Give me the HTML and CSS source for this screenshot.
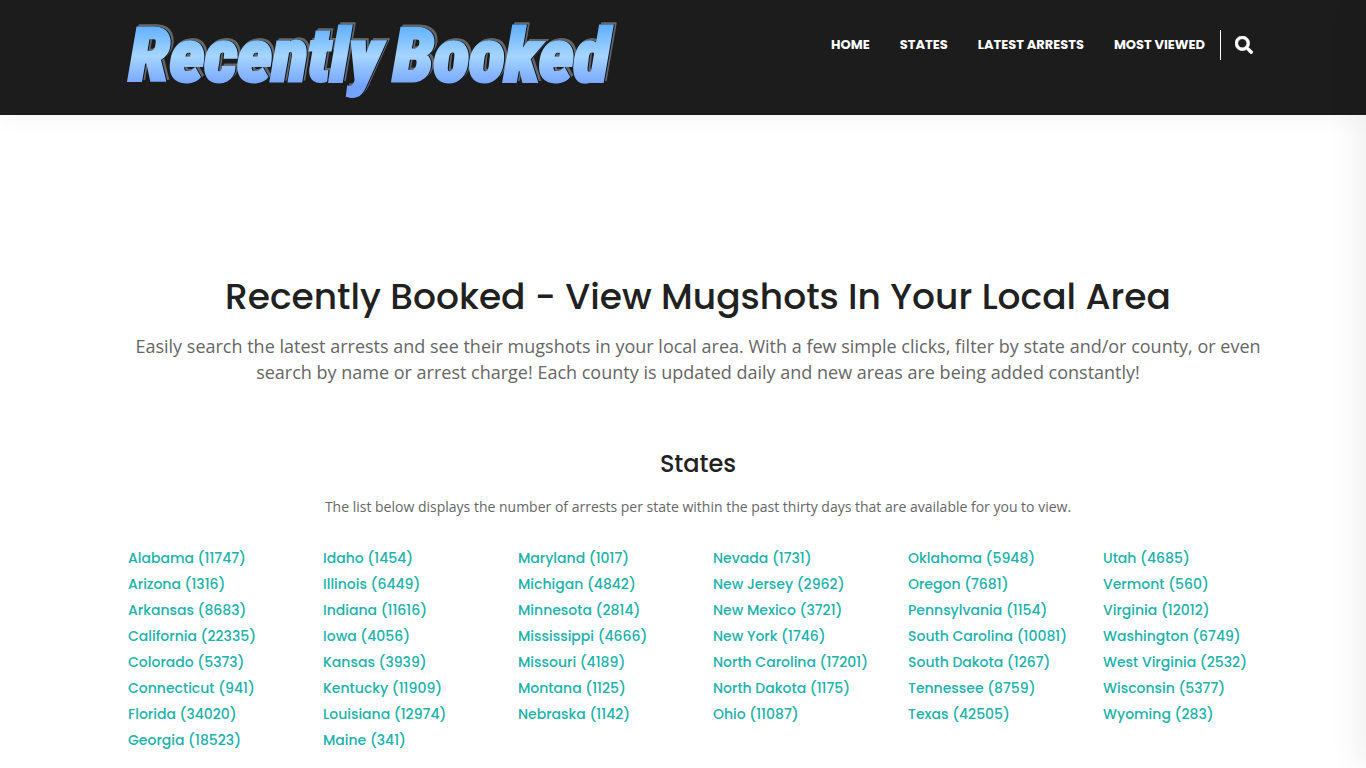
FILE: index.html
```html
<!DOCTYPE html>
<html lang="en">
<head>
<meta charset="utf-8">
<meta name="viewport" content="width=device-width, initial-scale=1">
<title>Recently Booked</title>
<link rel="stylesheet" href="styles.css">
</head>
<body>
<header class="header">
  <div class="header-inner">
    <a class="logo" href="#" aria-label="Recently Booked">
      <svg class="logo-art" viewBox="0 0 492 72" role="img">
        <defs>
          <linearGradient id="sky" gradientUnits="userSpaceOnUse" x1="0" y1="6" x2="0" y2="66">
            <stop offset="0" stop-color="#62b0fc"/>
            <stop offset=".5" stop-color="#a6d5ff"/>
            <stop offset="1" stop-color="#74a3ff"/>
          </linearGradient>
        </defs>
        <text class="logo-text" y="61"><tspan x="4">Recently </tspan><tspan x="268">Booked</tspan></text>
      </svg>
    </a>
    <nav class="nav">
      <a href="#">HOME</a>
      <a href="#">STATES</a>
      <a href="#">LATEST ARRESTS</a>
      <a href="#">MOST VIEWED</a>
    </nav>
    <button class="search" type="button" aria-label="Search">
      <svg viewBox="0 0 512 512" width="18" height="18"><path fill="currentColor" d="M505 442.700 405.300 343c-4.500-4.500-10.600-7-17-7H372c27.600-35.300 44-79.700 44-128C416 93.100 322.900 0 208 0S0 93.100 0 208s93.100 208 208 208c48.300 0 92.700-16.400 128-44v16.300c0 6.400 2.500 12.500 7 17l99.700 99.700c9.400 9.400 24.600 9.400 33.900 0l28.300-28.300c9.400-9.400 9.400-24.600.1-34zM208 336c-70.700 0-128-57.200-128-128 0-70.700 57.200-128 128-128 70.700 0 128 57.200 128 128 0 70.700-57.200 128-128 128z" stroke="currentColor" stroke-width="16"/></svg>
    </button>
  </div>
</header>
<main class="main">
  <h1>Recently Booked - View Mugshots In Your Local Area</h1>
  <p class="lead">Easily search the latest arrests and see their mugshots in your local area. With a few simple clicks, filter by state and/or county, or even search by name or arrest charge! Each county is updated daily and new areas are being added constantly!</p>
  <h2>States</h2>
  <p class="note">The list below displays the number of arrests per state within the past thirty days that are available for you to view.</p>
  <div class="states">
    <ul>
      <li><a href="#">Alabama (11747)</a></li>
      <li><a href="#">Arizona (1316)</a></li>
      <li><a href="#">Arkansas (8683)</a></li>
      <li><a href="#">California (22335)</a></li>
      <li><a href="#">Colorado (5373)</a></li>
      <li><a href="#">Connecticut (941)</a></li>
      <li><a href="#">Florida (34020)</a></li>
      <li><a href="#">Georgia (18523)</a></li>
    </ul>
    <ul>
      <li><a href="#">Idaho (1454)</a></li>
      <li><a href="#">Illinois (6449)</a></li>
      <li><a href="#">Indiana (11616)</a></li>
      <li><a href="#">Iowa (4056)</a></li>
      <li><a href="#">Kansas (3939)</a></li>
      <li><a href="#">Kentucky (11909)</a></li>
      <li><a href="#">Louisiana (12974)</a></li>
      <li><a href="#">Maine (341)</a></li>
    </ul>
    <ul>
      <li><a href="#">Maryland (1017)</a></li>
      <li><a href="#">Michigan (4842)</a></li>
      <li><a href="#">Minnesota (2814)</a></li>
      <li><a href="#">Mississippi (4666)</a></li>
      <li><a href="#">Missouri (4189)</a></li>
      <li><a href="#">Montana (1125)</a></li>
      <li><a href="#">Nebraska (1142)</a></li>
    </ul>
    <ul>
      <li><a href="#">Nevada (1731)</a></li>
      <li><a href="#">New Jersey (2962)</a></li>
      <li><a href="#">New Mexico (3721)</a></li>
      <li><a href="#">New York (1746)</a></li>
      <li><a href="#">North Carolina (17201)</a></li>
      <li><a href="#">North Dakota (1175)</a></li>
      <li><a href="#">Ohio (11087)</a></li>
    </ul>
    <ul>
      <li><a href="#">Oklahoma (5948)</a></li>
      <li><a href="#">Oregon (7681)</a></li>
      <li><a href="#">Pennsylvania (1154)</a></li>
      <li><a href="#">South Carolina (10081)</a></li>
      <li><a href="#">South Dakota (1267)</a></li>
      <li><a href="#">Tennessee (8759)</a></li>
      <li><a href="#">Texas (42505)</a></li>
    </ul>
    <ul>
      <li><a href="#">Utah (4685)</a></li>
      <li><a href="#">Vermont (560)</a></li>
      <li><a href="#">Virginia (12012)</a></li>
      <li><a href="#">Washington (6749)</a></li>
      <li><a href="#">West Virginia (2532)</a></li>
      <li><a href="#">Wisconsin (5377)</a></li>
      <li><a href="#">Wyoming (283)</a></li>
    </ul>
  </div>
</main>
<div class="edge-shadow"></div>
</body>
</html>
```
FILE: styles.css
```css
* { box-sizing: border-box; }
body {
  margin: 0;
  background: #fff;
  color: #666;
  font-family: "Open Sans", sans-serif;
  font-size: 14px;
}
a { text-decoration: none; }
h1, h2, .nav, .states {
  font-family: Poppins, Inter, sans-serif;
}
.header {
  background: #1c1c1c;
  box-shadow: 0 0 25px rgba(0, 0, 0, .06);
}
.header-inner {
  display: flex;
  align-items: flex-start;
  max-width: 1140px;
  min-height: 115px;
  margin: 0 auto;
  padding: 20px 0 20px 12px;
}
.logo { margin-right: auto; }
.logo-art { display: block; width: 492px; max-width: 100%; overflow: visible; }
.logo-text {
  font-family: Impact, "Roboto Condensed", "Liberation Sans Narrow", Roboto, sans-serif;
  font-size: 74px;
  font-style: italic;
  font-weight: 900;
  fill: url(#sky);
  stroke: url(#sky);
  stroke-width: 3px;
  filter: drop-shadow(1px 0 0 #05142c) drop-shadow(2px -2px 0 #666);
}
.nav {
  display: flex;
  gap: 30px;
  margin-top: 10px;
  padding-right: 15px;
  border-right: 1px solid #fff;
  font-size: 13px;
  font-weight: 700;
  line-height: 30px;
  white-space: nowrap;
}
.nav a { color: #fff; }
.search {
  display: flex;
  margin: 16px 0 0 14px;
  padding: 0;
  border: 0;
  background: none;
  color: #fff;
}
.main {
  max-width: 1170px;
  margin: 0 auto;
  padding: 160px 0 20px 30px;
  text-align: center;
}
h1, h2 { margin: 0; color: #212121; font-weight: 500; }
h1 { font-size: 36px; line-height: 44px; }
.lead { margin: 14px 0 0; font-size: 18px; line-height: 26px; }
h2 { margin-top: 64px; font-size: 24px; line-height: 30px; }
.note { margin: 16px 0 0; line-height: 24px; }
.states {
  display: grid;
  grid-template-columns: repeat(6, 1fr);
  gap: 30px;
  margin-top: 26px;
  text-align: left;
  font-weight: 500;
  line-height: 26px;
  white-space: nowrap;
}
.states ul { margin: 0; padding: 0; list-style: none; }
.states a { color: #20b2aa; }
.edge-shadow {
  position: fixed;
  top: 0;
  bottom: 0;
  left: 100%;
  width: 20px;
  box-shadow: 0 0 36px rgba(0, 0, 0, .12);
}
```
